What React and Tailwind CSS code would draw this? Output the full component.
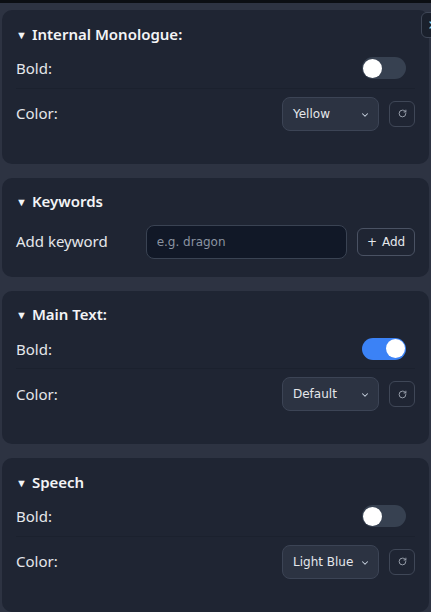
import { ChevronDown, RotateCw, X } from "lucide-react";

const font = { fontFamily: '"Noto Sans", "Open Sans", sans-serif' };

function Toggle({ on }) {
    return (
        <div
            className={`w-[44px] h-[22px] rounded-full flex items-center px-[1px] ${on ? "bg-[#3b82f6] justify-end" : "bg-[#374151] justify-start"}`}
        >
            <div className="w-[19px] h-[19px] rounded-full bg-white" />
        </div>
    );
}

function ColorSelect({ value }) {
    return (
        <div className="flex items-center gap-[10px]">
            <div className="relative w-[97px] h-[34px] rounded-[8px] bg-[#2c3342] border border-[#3c4455] flex items-center pl-[10px]">
                <span className="text-[12px] font-[DejaVu_Sans] text-[#e5e7eb]">{value}</span>
                <ChevronDown className="absolute right-[8px] top-[12px] text-[#cbd5e1]" size={10} strokeWidth={2.5} />
            </div>
            <button className="w-[26px] h-[26px] rounded-[6px] border border-[#3f4757] flex items-center justify-center text-[#9ca3af]">
                <RotateCw size={9} strokeWidth={2.5} />
            </button>
        </div>
    );
}

function Header({ title }) {
    return (
        <div className="h-5 flex items-center gap-[5px] text-[15px] font-semibold text-[#f3f4f6]">
            <span className="text-[11px] leading-none">▼</span>
            <span>{title}</span>
        </div>
    );
}

function StyleCard({ title, bold, color }) {
    return (
        <div className="bg-[#1f2533] rounded-[10px] px-[14px] pt-[14px] pb-[25px]">
            <Header title={title} />
            <div className="mt-[5px] flex items-center justify-between py-2 pr-[9px] border-b border-[#1b212e]">
                <span className="text-[15px] text-[#e5e7eb]">Bold:</span>
                <Toggle on={bold} />
            </div>
            <div className="flex items-center justify-between py-2">
                <span className="text-[15px] text-[#e5e7eb]">Color:</span>
                <ColorSelect value={color} />
            </div>
        </div>
    );
}

function KeywordsCard() {
    return (
        <div className="bg-[#1f2533] rounded-[10px] px-[14px] pt-[14px] pb-[10px]">
            <Header title="Keywords" />
            <div className="mt-[5px] flex items-center py-2">
                <span className="text-[15px] text-[#e5e7eb] w-[130px]">Add keyword</span>
                <input
                    type="text"
                    placeholder="e.g. dragon"
                    className="w-[202px] h-[34px] rounded-[8px] bg-[#111827] border border-[#3a4353] px-[10px] text-[12px] font-[DejaVu_Sans] text-[#e5e7eb] placeholder:text-[#8b93a1] outline-none"
                />
                <button className="ml-[10px] w-[58px] h-[28px] rounded-[6px] border border-[#4a5263] flex items-center justify-center gap-[5px] text-[12px] font-[DejaVu_Sans] text-[#e5e7eb]">
                    <span>+</span>
                    <span>Add</span>
                </button>
            </div>
        </div>
    );
}

export default function App() {
    return (
        <div className="relative w-[431px] h-[612px] overflow-hidden bg-[#2d3342]" style={font}>
            <div className="h-[3px] bg-[#0b0e13]" />
            <div className="pt-[7px] pl-[2px] pr-[2px] flex flex-col gap-[14px]">
                <StyleCard title="Internal Monologue:" bold={false} color="Yellow" />
                <KeywordsCard />
                <StyleCard title="Main Text:" bold={true} color="Default" />
                <StyleCard title="Speech" bold={false} color="Light Blue" />
            </div>

            {/* close button poking in from the right */}
            <button className="absolute top-[12px] left-[421px] w-[26px] h-[26px] rounded-[6px] border border-[#3f4757] bg-[#1a202c] flex items-center pl-[5px] text-[#7dd3fc]">
                <X size={12} strokeWidth={2.5} />
            </button>
        </div>
    );
}
